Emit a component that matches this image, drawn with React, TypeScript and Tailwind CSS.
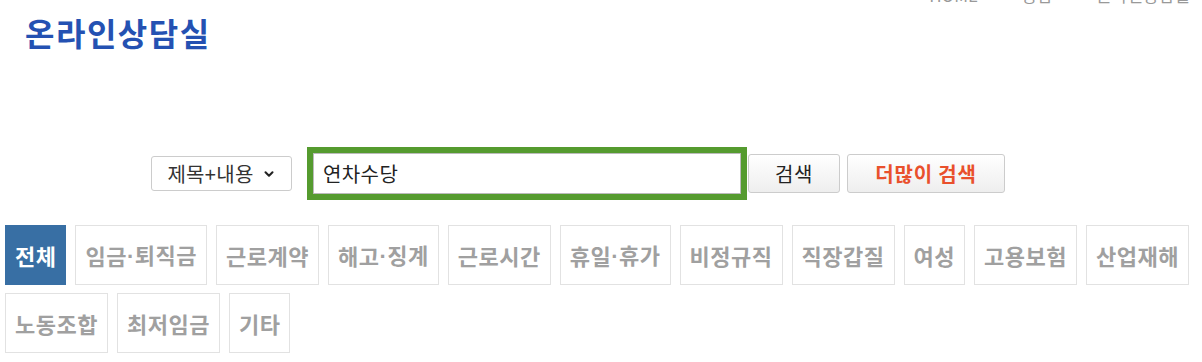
import { ChevronDown } from 'lucide-react';

const categories = [
  '전체',
  '임금·퇴직금',
  '근로계약',
  '해고·징계',
  '근로시간',
  '휴일·휴가',
  '비정규직',
  '직장갑질',
  '여성',
  '고용보험',
  '산업재해',
  '노동조합',
  '최저임금',
  '기타',
];

// the CJK font gives the middle dot a full-width box, so it's set in Arial widths
function Label({ text }: { text: string }) {
  const parts = text.split('·');
  return (
    <>
      {parts.map((p, i) => (
        <span key={i}>
          {i > 0 && <span className="font-['Liberation_Sans',sans-serif]">·</span>}
          {p}
        </span>
      ))}
    </>
  );
}

function App() {
  const active = '전체';

  return (
    <div className="w-[1202px] h-[362px] overflow-hidden bg-white font-['Noto_Sans_CJK_KR','Noto_Sans',sans-serif]">
      <div className="flex justify-end pr-[12px] -mt-[15px] h-[20px] text-[17px] leading-[20px] text-[#999]">
        <span>HOME</span>
        <span className="mx-[17px] text-[#ccc]">&gt;</span>
        <span>상담</span>
        <span className="mx-[17px] text-[#ccc]">&gt;</span>
        <span>온라인상담실</span>
      </div>

      <h1 className="pl-[25px] mt-[8px] text-[32px] leading-[38px] font-bold tracking-[1.5px] text-[#2451b2]">
        온라인상담실
      </h1>

      <div className="mt-[96px] pl-[151px] flex items-center">
        <button className="w-[141px] h-[35px] flex items-center justify-center gap-[8px] border border-[#ccc] rounded-[3px] bg-white text-[20px] tracking-[0.3px] text-[#333]">
          <span>제목+내용</span>
          <ChevronDown className="w-[14px] h-[14px] text-[#222]" strokeWidth={3.5} />
        </button>
        <div className="ml-[15px] w-[440px] h-[53px] border-[6px] border-[#559b2f] bg-white">
          <div className="h-full border border-[#bbb] flex items-center pl-[9px] text-[20px] tracking-[0.4px] text-[#222]">
            연차수당
          </div>
        </div>
        <button className="ml-[1px] w-[92px] h-[39px] border border-[#ccc] rounded-[3px] bg-gradient-to-b from-white to-[#eee] text-[20px] tracking-[0.5px] text-[#222]">
          검색
        </button>
        <button className="ml-[7px] w-[158px] h-[39px] border border-[#ccc] rounded-[3px] bg-gradient-to-b from-white to-[#eee] text-[20px] tracking-[0.8px] font-bold text-[#e9502c]">
          더많이 검색
        </button>
      </div>

      <div className="mt-[25px] pl-[5px] flex flex-wrap gap-x-[9px] gap-y-[8px] w-[1200px]">
        {categories.map((c) =>
          c === active ? (
            <div
              key={c}
              className="h-[60px] px-[10px] flex items-center bg-[#386fa4] text-white text-[22px] tracking-[0.5px] font-bold"
            >
              <Label text={c} />
            </div>
          ) : (
            <div
              key={c}
              className="h-[60px] px-[9px] flex items-center border border-[#e2e2e2] text-[#a0a0a0] text-[22px] tracking-[0.5px] font-bold"
            >
              <Label text={c} />
            </div>
          )
        )}
      </div>
    </div>
  );
}

export default App;
